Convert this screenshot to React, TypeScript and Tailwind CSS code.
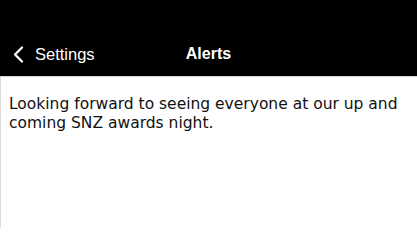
import React from "react";

const ChevronLeft = () => (
  <svg width="11" height="17" viewBox="0 0 11 17" fill="none">
    <path d="M9 1.5 L2 8.5 L9 15.5" stroke="white" strokeWidth="2.2" strokeLinecap="round" strokeLinejoin="round" />
  </svg>
);

const App = () => {
  return (
    <div className="flex flex-col w-[417px] h-[228px] bg-white overflow-hidden">
      <header className="relative flex items-end h-[77px] bg-black pb-[12px] font-['Liberation_Sans',Arial,sans-serif] text-white border-b border-[#d4d4d4]">
        <div className="flex items-center gap-[11px] pl-[13px]">
          <ChevronLeft />
          <span className="text-[16.5px] leading-[20px]">Settings</span>
        </div>
        <span className="absolute left-0 right-0 bottom-[12px] text-center text-[16px] leading-[20px] font-bold">
          Alerts
        </span>
      </header>

      <main className="flex-1 border-l border-[#dcdcdc] px-[8px] pt-[18px] font-['DejaVu_Sans',Verdana,sans-serif] text-[15.5px] leading-[19px] text-[#111]">
        <p>Looking forward to seeing everyone at our up and coming SNZ awards night.</p>
      </main>
    </div>
  );
};

export default App;
